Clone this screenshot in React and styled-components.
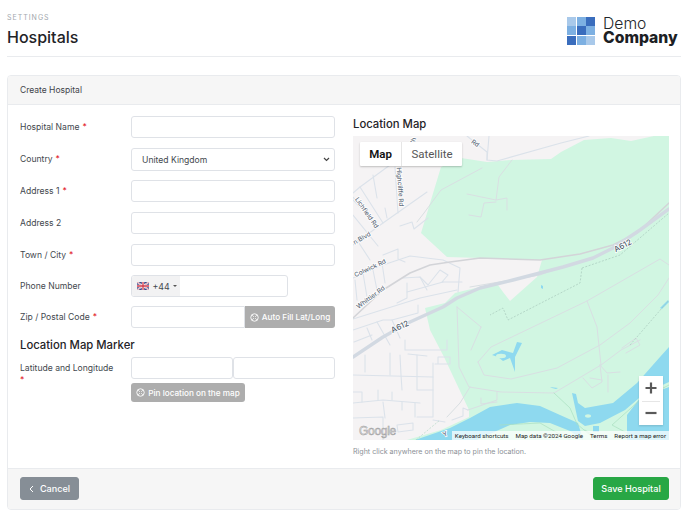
import React from "react";
import styled, { createGlobalStyle } from "styled-components";

const Global = createGlobalStyle`
  html, body { margin: 0; padding: 0; background: #fff; }
  body { font-family: Inter, "Liberation Sans", sans-serif; color: #3f444a; }
  * { box-sizing: border-box; }
`;

const Page = styled.div`
  width: 688px; height: 521px; padding: 0 7px; overflow: hidden;
  display: flex; flex-direction: column;
`;
const TopBar = styled.header`
  height: 57px; flex: none; display: flex; justify-content: space-between;
  border-bottom: 1px solid #e9ebee;
`;
const TitleBlock = styled.div`display: flex; flex-direction: column; padding-top: 14px;`;
const Eyebrow = styled.div`
  font-size: 7px; line-height: 8px; letter-spacing: 1px; color: #a3a8ae; text-transform: uppercase;
`;
const Title = styled.h1`
  margin: 5px 0 0; font-size: 16px; line-height: 21px; font-weight: 500; color: #1f2327;
`;
const Logo = styled.div`display: flex; align-items: flex-start; gap: 8px; padding: 17px 3px 0 0;`;
const LogoGrid = styled.div`
  display: grid; grid-template-columns: repeat(3, 9px); grid-auto-rows: 9px; gap: 0.4px;
`;
const LogoCell = styled.span`background: ${p => p.$c};`;
const LogoText = styled.div`display: flex; flex-direction: column; width: 75px;`;
const LogoLight = styled.span`font-size: 15.7px; line-height: 14px; font-weight: 300; color: #22262a;`;
const LogoBold = styled.span`font-size: 15.7px; line-height: 14px; font-weight: 800; color: #1c2024;`;

const Card = styled.section`
  margin-top: 18px; height: 435px; flex: none; display: flex; flex-direction: column;
  border: 1px solid #e9ebee; border-radius: 4px; overflow: hidden;
`;
const CardHead = styled.div`
  height: 29px; flex: none; padding: 0 12px; display: flex; align-items: center;
  background: #f6f6f6; border-bottom: 1px solid #e9ebee;
  font-size: 8.5px; color: #3f444a;
`;
const CardBody = styled.div`
  flex: 1; min-height: 0; display: grid; grid-template-columns: 315px 316px; column-gap: 18px;
  padding: 11px 12px 0;
`;
const CardFoot = styled.div`
  height: 41px; flex: none; padding: 7px 11px 9px 12px; display: flex; justify-content: space-between;
  background: #f6f6f6; border-top: 1px solid #e9ebee;
`;
const FormCol = styled.div`display: flex; flex-direction: column;`;
const Row = styled.div`
  display: grid; grid-template-columns: 111px 204px; align-items: start;
  margin-bottom: ${p => p.$mb ?? 10}px;
`;
const Label = styled.label`
  font-size: 8.6px; line-height: 12px; padding-top: 5px; color: #43484e;
`;
const Star = styled.span`
  color: #e2212b; margin-left: 3px;
  ${p => p.$block && "display: block; margin-left: 0;"}
`;
const Field = styled.input`
  display: block; width: ${p => p.$w || "100%"}; height: 22px; padding: 0 8px; flex: ${p => p.$flex || "none"};
  background: #fff; border: 1px solid #dfe2e7; border-radius: ${p => p.$r || "3px"}; outline: none; min-width: 0;
`;
const Select = styled.select`
  display: block; width: 100%; height: 23px; padding: 0 10px; appearance: none;
  background: #fff url("data:image/svg+xml,%3Csvg xmlns='http://www.w3.org/2000/svg' width='7' height='5' viewBox='0 0 7 5'%3E%3Cpath d='M1 1l2.5 2.5L6 1' fill='none' stroke='%23444' stroke-width='1.2'/%3E%3C/svg%3E") no-repeat right 4px center;
  border: 1px solid #dfe2e7; border-radius: 3px; font-family: inherit; font-size: 8.6px; color: #43484e;
`;
const Phone = styled.div`
  display: flex; width: 157px; height: 22px; border: 1px solid #dfe2e7; border-radius: 3px; overflow: hidden;
`;
const Dial = styled.div`
  width: 48px; display: flex; align-items: center; gap: 3.5px; padding-left: 5px;
  background: #f2f2f3; font-size: 8.8px; color: #43484e;
`;
const Caret = styled.span`
  width: 0; height: 0; border-left: 2px solid transparent; border-right: 2px solid transparent; border-top: 2.5px solid #555;
`;
const Joined = styled.div`display: flex;`;
const ActionButton = styled.button`
  display: flex; align-items: center; justify-content: center; gap: 3px; padding: 0; flex: none;
  width: ${p => p.$w}px; height: ${p => p.$h}px; margin-top: ${p => p.$mt || 0}px;
  background: #adadad; color: #fff; border: 0; border-radius: ${p => p.$r || "3px"};
  font-family: inherit; font-size: 8.2px; font-weight: 500; white-space: nowrap;
`;
const Heading = styled.h2`
  margin: ${p => p.$m || 0}; font-size: 11.3px; line-height: 15px; font-weight: 500; color: #1f2327;
`;
const MapCol = styled.div`display: flex; flex-direction: column;`;
const MapBox = styled.div`
  position: relative; width: 316px; height: 304px; margin-top: 4px; overflow: hidden; background: #d1f6e2;
`;
const MapSvg = styled.svg`display: block;`;
const Land = styled.polygon`fill: #f5f3f4;`;
const Water = styled.path`fill: #8ed9ef;`;
const Pond = styled.ellipse`fill: #d1f6e2;`;
const Line = styled.polyline`
  fill: none; stroke: ${p => p.$c}; stroke-width: ${p => p.$w}; stroke-linejoin: round; stroke-linecap: round;
  ${p => p.$dash && `stroke-dasharray: ${p.$dash}; stroke-linecap: butt;`}
`;
const MapLabel = styled.text`
  font-family: Inter, "Liberation Sans", sans-serif; font-size: ${p => p.$s || 6.4}px; font-weight: 500; fill: ${p => p.$s ? "#4f5d6c" : "#5f6d7c"};
  stroke: #fff; stroke-width: 1.6px; paint-order: stroke; text-anchor: middle;
`;
const Tabs = styled.div`
  position: absolute; left: 7px; top: 6px; display: flex; height: 24px; background: #fff;
  box-shadow: 0 1px 2px rgba(0,0,0,.22); border-radius: 1px;
  font-family: Roboto, sans-serif; font-size: 11.5px;
`;
const Tab = styled.div`
  display: flex; align-items: center; justify-content: center; width: ${p => p.$w}px;
  color: ${p => p.$on ? "#111" : "#565656"}; font-weight: ${p => p.$on ? 600 : 400};
  ${p => p.$on && "border-right: 1px solid #e6e6e6;"}
`;
const Zoom = styled.div`
  position: absolute; left: 286px; top: 240px; width: 24px; height: 49px; background: #fff;
  display: flex; flex-direction: column; align-items: center; box-shadow: 0 1px 2px rgba(0,0,0,.15);
`;
const ZoomBtn = styled.div`
  width: 24px; height: 24.5px; display: flex; align-items: center; justify-content: center;
  ${p => p.$sep && "position: relative; &::before { content: ''; position: absolute; left: 3px; right: 3px; top: 0; height: 1px; background: #e6e6e6; }"}
`;
const Attribution = styled.div`
  position: absolute; right: 0; bottom: 0; height: 9px; display: flex; align-items: center; gap: 7px;
  padding: 0 3px; background: rgba(255,255,255,.72);
  font-family: Roboto, sans-serif; font-size: 6.2px; color: #222; white-space: nowrap;
`;
const GoogleMark = styled.div`
  position: absolute; left: 6px; bottom: 2px; font-family: "Liberation Sans", sans-serif; font-size: 12px;
  color: #e6e6e6; -webkit-text-stroke: 0.5px #9a9a9a; letter-spacing: -0.3px; line-height: 14px;
`;
const Hint = styled.p`margin: 7px 0 0; font-size: 7.1px; line-height: 9px; color: #8b9096;`;
const FootButton = styled.button`
  display: flex; align-items: center; justify-content: center; gap: 6px; height: 23px; margin-top: 1px; padding: 0;
  width: ${p => p.$w}px; background: ${p => p.$bg}; color: #fff; border: 1px solid ${p => p.$bg}; border-radius: 3px;
  font-family: inherit; font-size: 9.1px; font-weight: 500;
`;

const Target = () => (
  <svg width="9" height="9" viewBox="0 0 12 12" fill="none" stroke="#fff" strokeWidth="1.2">
    <circle cx="6" cy="6" r="5" />
    <path d="M3 3l2 2M9 3L7 5M3 9l2-2M9 9L7 7" />
  </svg>
);
const Flag = () => (
  <svg width="12" height="8" viewBox="0 0 12 8">
    <rect width="12" height="8" fill="#3a4a8c" />
    <path d="M0 0l12 8M12 0L0 8" stroke="#fff" strokeWidth="1.5" />
    <path d="M0 0l12 8M12 0L0 8" stroke="#cf3a4a" strokeWidth=".5" />
    <path d="M6 0v8M0 4h12" stroke="#fff" strokeWidth="2.4" />
    <path d="M6 0v8M0 4h12" stroke="#cf3a4a" strokeWidth="1.3" />
  </svg>
);

const CELLS = ["#a9c9ea", "#7db0e2", "#3a6dbd", "#7db0e2", "#3a6dbd", "#7db0e2", "#3a6dbd", "#7db0e2", "#a9c9ea"];

const LAND = "353,136 654,136 631,141 611,138 584,140 561,152 551,159 511,160 487,162 461,158 441,167 421,233 447,257 480,258 542,260 537,277 510,301 503,292 498,285 480,287 463,291 455,293 445,303 425,308 430,330 444,357 469,410 469,417 441,430 407,440 353,440";

const STREET = "#dbe2ea";
const streets = [
  "390,165 360,187 353,193", "360,187 383,223 353,245", "353,197 377,227", "353,215 378,246", "395,167 398,213",
  "373,175 377,198", "385,208 387,218", "383,223 427,192", "400,226 412,222 414,229 428,218", "353,200 362,209",
  "489,136 487,160 497,161 561,143 589,136", "467,136 487,152 487,160",
  "353,278 383,265 410,256 443,260 460,268 458,292", "355,280 357,300", "363,273 367,297", "373,270 377,290", "382,263 385,283",
  "357,240 370,260", "383,255 398,249 398,259 405,262", "403,278 420,277 428,285 440,270 448,275 442,282 462,282",
  "407,283 407,298 397,303", "407,292 443,282", "420,277 427,290", "353,330 383,320 392,320 418,313 418,305", "353,319 420,298 457,290",
  "367,328 372,340", "377,322 390,345", "392,320 400,338", "354,342 372,335",
  "405,340 405,350 447,350 447,340", "390,353 390,375", "400,355 401,375 402,390", "417,355 417,390 433,390", "408,354 427,356",
  "433,363 433,417 417,417", "435,364 450,364 450,357 438,357 438,364", "353,375 433,377", "378,390 378,400", "383,402 385,418",
  "353,403 383,400 420,403", "402,402 402,410", "415,403 415,417", "353,392 362,392 362,402", "353,418 383,417 383,440", "392,392 392,400",
  "397,425 413,423 413,430 398,432 397,425", "433,420 445,422", "452,420 463,416 463,408 468,410", "365,355 365,372",
];
const TRAILS = "#d9dfe2";
const trails = [
  "482,168 441,190 424,213 417,222", "512,160 499,177 496,200 467,194", "496,200 507,198 507,210", "496,202 484,203 481,217 469,215",
  "457,307 459,367 469,387 501,392 554,393 601,365", "481,327 471,350", "457,307 481,327",
  "478,362 491,347 587,301 660,259 669,265", "478,362 484,375 511,379 557,368 600,345 630,323 658,295 669,278",
  "587,301 597,327 601,365", "601,365 621,350 640,340", "626,353 640,345 636,338 622,348",
  "470,387 460,403 447,417", "468,410 497,400 497,392", "481,398 481,404 497,402",
  "600,365 607,373 620,372", "608,375 608,392", "583,378 592,388 602,382 600,365", "590,378 602,380",
  "470,287 540,275 555,269",
];
const GREENTRACK = [
  "554,393 570,408 577,424", "600,440 585,430", "640,440 612,425 640,400 669,385", "577,424 590,435", "500,425 540,423 570,440",
];

export default function App() {
  return (
    <Page>
      <Global />
      <TopBar>
        <TitleBlock>
          <Eyebrow>Settings</Eyebrow>
          <Title>Hospitals</Title>
        </TitleBlock>
        <Logo>
          <LogoGrid>{CELLS.map((c, i) => <LogoCell key={i} $c={c} />)}</LogoGrid>
          <LogoText>
            <LogoLight>Demo</LogoLight>
            <LogoBold>Company</LogoBold>
          </LogoText>
        </Logo>
      </TopBar>
      <Card>
        <CardHead>Create Hospital</CardHead>
        <CardBody>
          <FormCol>
            <Row><Label>Hospital Name<Star>*</Star></Label><Field /></Row>
            <Row $mb={9}>
              <Label>Country<Star>*</Star></Label>
              <Select defaultValue="uk"><option value="uk">United Kingdom</option></Select>
            </Row>
            <Row><Label>Address 1<Star>*</Star></Label><Field /></Row>
            <Row><Label>Address 2</Label><Field /></Row>
            <Row $mb={9}><Label>Town / City<Star>*</Star></Label><Field /></Row>
            <Row $mb={9}>
              <Label>Phone Number</Label>
              <Phone><Dial><Flag />+44<Caret /></Dial></Phone>
            </Row>
            <Row $mb={0}>
              <Label>Zip / Postal Code<Star>*</Star></Label>
              <Joined>
                <Field $flex="1" $r="3px 0 0 3px" />
                <ActionButton $w={90} $h={22} $r="0 3px 3px 0"><Target />Auto Fill Lat/Long</ActionButton>
              </Joined>
            </Row>
            <Heading $m="10px 0 4px">Location Map Marker</Heading>
            <Row $mb={0}>
              <Label>Latitude and Longitude<Star $block>*</Star></Label>
              <div>
                <Joined>
                  <Field $flex="1" />
                  <Field $flex="1" />
                </Joined>
                <ActionButton $w={114} $h={19} $mt={4}><Target />Pin location on the map</ActionButton>
              </div>
            </Row>
          </FormCol>
          <MapCol>
            <Heading $m="1px 0 0">Location Map</Heading>
            <MapBox>
              <MapSvg width="316" height="304" viewBox="353 136 316 304">
                <Land points={LAND} />
                <Water d="M415 440L450 428 470 418 490 407 517 403 540 406 560 415 578 423 583 440 570 431 550 423 530 422 510 425 483 437 477 440Z" />
                <Water d="M572 393L576 394 578 403 585 408 613 403 637 383 660 357 669 347V382L645 393 625 410 600 423 585 426 578 421 575 407Z" />
                <Water d="M627 440V415L640 398 669 387V440Z" />
                <Water d="M593 426H599V432H593Z" />
                <Water d="M492 355L502 350 513 353 517 342 522 343 515 357 515 372 510 358 503 361 498 357Z" />
                <Water d="M550 387L558 388 556 389 552 388Z" />
                <Water d="M541 285L543 286 543 289 541 288Z" />
                <Water d="M660 308L668 300 669 302 662 309Z" />
                <Pond cx="501" cy="356" rx="5" ry="2.2" />
                <Pond cx="588" cy="416" rx="3" ry="1.7" />
                {streets.map((s, i) => <Line key={i} points={s} $c={STREET} $w={1.1} />)}
                {trails.map((s, i) => <Line key={i} points={s} $c={TRAILS} $w={1} />)}
                {GREENTRACK.map((s, i) => <Line key={i} points={s} $c="#a9dfc0" $w={0.7} />)}
                <Line points="582,268 580,283 508,320 503,308 490,315" $c="#a8c8bc" $w={0.7} $dash="2 1.5" />
                <Line points="582,268 620,255 669,213" $c="#a8c8bc" $w={0.7} $dash="2 1.5" />
                <Line points="630,345 669,300" $c="#a8c8bc" $w={0.7} $dash="2 1.5" />
                <Line points="416,440 440,420" $c="#a8d4bc" $w={0.6} $dash="2 1.5" />
                <Line points="669,203 637,233 613,245 580,254 540,260 480,258 450,262 430,265 410,273 383,290 353,318" $c="#d3d4d8" $w={1.6} />
                <Line points="669,209 640,230 613,248 593,258 563,267 513,280 480,288 457,298 443,307 410,322 383,337 353,357" $c="#d2d9e2" $w={3.4} />
                <MapLabel x="398" y="187" transform="rotate(86 398 187)">Highcliffe Rd</MapLabel>
                <MapLabel x="365" y="214" transform="rotate(55 365 214)">Lichfield Rd</MapLabel>
                <MapLabel x="363" y="240" transform="rotate(-30 363 240)">n Blvd</MapLabel>
                <MapLabel x="371" y="270" transform="rotate(-25 371 270)">Colwick Rd</MapLabel>
                <MapLabel x="372" y="299" transform="rotate(-37 372 299)">Whittier Rd</MapLabel>
                <MapLabel x="474" y="145" transform="rotate(35 474 145)">Rd</MapLabel>
                <MapLabel x="415" y="142" transform="rotate(-70 415 142)">Sh</MapLabel>
                <MapLabel x="624" y="248" $s={7.8} transform="rotate(-28 624 248)">A612</MapLabel>
                <MapLabel x="401" y="329" $s={7.8} transform="rotate(-25 401 329)">A612</MapLabel>
                <MapLabel x="446" y="436" transform="rotate(-25 446 436)">Y</MapLabel>
              </MapSvg>
              <Tabs>
                <Tab $w={42} $on>Map</Tab>
                <Tab $w={60}>Satellite</Tab>
              </Tabs>
              <Zoom>
                <ZoomBtn>
                  <svg width="12" height="12" viewBox="0 0 12 12"><path d="M6 .5v11M.5 6h11" stroke="#595959" strokeWidth="2.2" /></svg>
                </ZoomBtn>
                <ZoomBtn $sep>
                  <svg width="12" height="12" viewBox="0 0 12 12"><path d="M.5 6h11" stroke="#595959" strokeWidth="2.2" /></svg>
                </ZoomBtn>
              </Zoom>
              <GoogleMark>Google</GoogleMark>
              <Attribution>
                <span>Keyboard shortcuts</span>
                <span>Map data ©2024 Google</span>
                <span>Terms</span>
                <span>Report a map error</span>
              </Attribution>
            </MapBox>
            <Hint>Right click anywhere on the map to pin the location.</Hint>
          </MapCol>
        </CardBody>
        <CardFoot>
          <FootButton $w={59} $bg="#868e96">
            <svg width="5" height="8" viewBox="0 0 5 8" fill="none" stroke="#fff" strokeWidth="1"><path d="M4 1L1 4l3 3" /></svg>
            Cancel
          </FootButton>
          <FootButton $w={76} $bg="#28a745">Save Hospital</FootButton>
        </CardFoot>
      </Card>
    </Page>
  );
}
